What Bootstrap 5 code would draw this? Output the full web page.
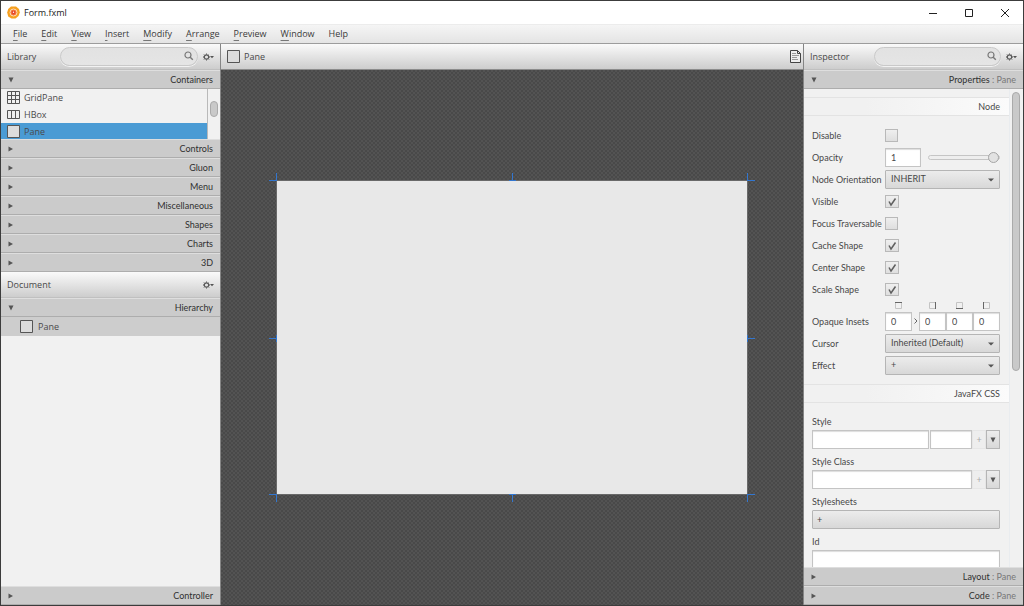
<!DOCTYPE html>
<html lang="en">
<head>
<meta charset="utf-8">
<meta name="viewport" content="width=device-width, initial-scale=1">
<title>Form.fxml</title>
<link href="https://cdn.jsdelivr.net/npm/bootstrap@5.3.0/dist/css/bootstrap.min.css" rel="stylesheet">
<style>
:root { --ink:#484848; }
body { font-family:Lato,"Open Sans",sans-serif; font-size:9px; line-height:12px; color:var(--ink); background:#f1f1f1; }
button, input, select { font-family:inherit; font-size:inherit; line-height:inherit; color:inherit; }
.window { border:1px solid #3c3c3c; }
.titlebar, .menubar, .bar, .lib-item, .tree-item { font-family:"Open Sans","Noto Sans",sans-serif; font-size:9px; }
.titlebar { height:23px; background:#fff; color:#222; padding-left:6px; }
.win-btn { width:36px; height:22px; border:0; background:none; padding:0; }
.menubar { height:20px; background:linear-gradient(#f5f5f5,#e4e4e4); border-bottom:1px solid #9c9c9c; border-top:1px solid #ececec; gap:14px; padding-left:12px; }
.menubar a { color:#3a3a3a; text-decoration:none; }
.menubar u { text-underline-offset:3px; text-decoration-thickness:1px; text-decoration-color:#777; }
.side { flex:0 0 219px; box-sizing:content-box; min-width:0; }
.side-left { border-right:1px solid #858585; }
.side-right { border-left:1px solid #858585; }
.bar { height:26px; flex:none; background:linear-gradient(#fafafa,#cdcdcd); border-bottom:1px solid #c0c0c0; padding:0 6px; }
.content-bar { border-bottom:1px solid #8c8c8c; padding-right:2px; }
.search { position:relative; width:138px; height:19px; }
.search-short { width:127px; }
.search input { width:100%; height:100%; border:1px solid #c9c9c9; border-radius:10px; background:linear-gradient(#e2e2e2,#e5e5e5); padding:0 22px 0 8px; box-shadow:0 1px 0 #f2f2f2; }
.search svg { position:absolute; right:4px; top:4px; }
.gear { border:0; background:none; padding:0; width:12px; height:16px; }
.fold { height:19px; width:100%; flex:none; border:0; border-top:1px solid #dedede; border-bottom:1px solid #adadad; background:#cbcbcb; padding:0 7px; color:#303030; }
.fold .sub { color:#777; }
.fold svg { fill:#555; }
.lib-list { height:50px; border-right:1px solid #b9b9b9; overflow:hidden; }
.lib-item { height:17px; padding-left:6px; gap:4px; color:#4a4a4a; }
.lib-item.active { background:#4a9bd4; }
.tree-item { height:19px; background:#cdcdcd; padding-left:19px; gap:5px; color:#4a4a4a; }
.gutter { width:13px; padding:3px 3px 0 2px; flex:none; }
.gutter-list { width:12px; padding:12px 2px 0 2px; }
.thumb { width:8px; height:16px; border:1px solid #aaa; border-radius:4px; background:#c9c9c9; }
.long-thumb { height:279px; }
.stage { min-width:0; background-color:#4d4d4d; background-image:conic-gradient(#535353 25%,#494949 0 50%,#535353 0 75%,#494949 0); background-size:4px 4px; }
.artboard { position:relative; width:470px; height:313px; flex:none; background:#e8e8e8; box-shadow:0 0 0 1px #696969; }
.handle { position:absolute; overflow:visible; fill:none; stroke:#3276cf; stroke-width:1; }
.sheet { flex:1 1 0; min-width:0; }
.section-title { height:19px; border:1px solid #e3e3e3; border-left:0; border-right:0; background:linear-gradient(90deg,#f1f1f1 30%,#fbfbfb); padding-right:9px; font-weight:400; font-size:9px; line-height:12px; }
.props { padding:8px 9px 8px 8px; }
.prop { height:22px; }
.prop > label, .prop > .prop-label { width:73px; flex:none; white-space:nowrap; padding-top:2px; }
.field { height:19px; border:1px solid #c4c4c4; background:#fff; box-shadow:inset 0 1px 1px #ddd; padding:0 5px; border-radius:0; min-width:0; }
.amount { width:36px; }
.inset { width:27px; }
.style-value { width:42px; margin-left:1px; }
.drop { position:relative; height:19px; border:1px solid #b5b5b5; border-radius:1px; background:linear-gradient(#ececec,#d8d8d8); min-width:0; padding:0; }
.drop select { appearance:none; background:none; border:0; width:100%; height:17px; padding:0 5px; display:block; }
.drop svg { position:absolute; right:5px; top:6px; pointer-events:none; fill:#555; }
.tick { appearance:none; width:13px; height:13px; margin:0; border:1px solid #b9b9b9; background:linear-gradient(#efefef,#dfdfdf); }
.tick:checked { width:14px; background:url("data:image/svg+xml,%3Csvg xmlns='http://www.w3.org/2000/svg' viewBox='0 0 12 11'%3E%3Cpath d='M3 5.5 5 9 9.5 2.5' fill='none' stroke='%23606060' stroke-width='1.5'/%3E%3C/svg%3E") center/12px 11px no-repeat,linear-gradient(#efefef,#dfdfdf); }
.slide { appearance:none; width:72px; height:12px; background:none; margin:0; }
.slide::-webkit-slider-runnable-track { height:5px; border:1px solid #c5c5c5; border-radius:3px; background:#eee; }
.slide::-webkit-slider-thumb { appearance:none; width:11px; height:11px; margin-top:-4px; border:1px solid #a5a5a5; border-radius:50%; background:#e2e2e2; }
.insets-key { height:10px; padding-left:83px; }
.insets-key svg { fill:none; }
.block { height:40px; }
.block > label { display:block; height:19px; padding-top:5px; }
.mini { width:14px; height:19px; border:1px solid #e6e6e6; background:#eee; color:#aaa; padding:0; }
.mini-drop { width:14px; height:19px; border:1px solid #b5b5b5; background:linear-gradient(#ececec,#d8d8d8); padding:0; fill:#555; }
</style>
<script src="https://cdn.jsdelivr.net/npm/bootstrap@5.3.0/dist/js/bootstrap.bundle.min.js"></script>
</head>
<body>
<svg class="d-none">
  <symbol id="gear" viewBox="0 0 12 8"><circle cx="4.500" cy="4" r="2.200" fill="none" stroke="#555" stroke-width="1.200"/><path d="M4.500 0.500v1M4.500 6.500v1M1 4h1M7 4h1M2 1.500l.7.7M6.300 5.800l.7.7M2 6.500l.7-.7M6.300 2.200l.7-.7" stroke="#555"/><path d="M8 3h4L10 5.300z" fill="#555"/></symbol>
  <symbol id="lens" viewBox="0 0 10 10"><circle cx="4" cy="4" r="3" fill="none" stroke="#777" stroke-width="1.200"/><path d="M6.200 6.200 8.800 8.800" stroke="#777" stroke-width="1.400"/></symbol>
  <symbol id="right" viewBox="0 0 6 6"><path d="M.5.5 5 3 .5 5.500z"/></symbol>
  <symbol id="down" viewBox="0 0 6 6"><path d="M.5.5h5L3 5.500z"/></symbol>
  <symbol id="caret" viewBox="0 0 6 6"><path d="M0 1.500h6L3 4.500z"/></symbol>
  <symbol id="pane" viewBox="0 0 13 13"><path d="M.5.5h12v12H.5z" fill="#dcdcdc" stroke="#555"/></symbol>
</svg>
<div class="window vh-100 d-flex flex-column overflow-hidden">
  <header class="titlebar d-flex align-items-center flex-shrink-0">
    <svg width="13" height="13" viewBox="0 0 13 13" class="me-1"><path d="M4 .5h5L12 3l.8 3.500L11.500 10 8.500 12.600h-4L1.200 10.500 .2 6.500 1.200 3z" fill="#f6a01f"/><circle cx="6.500" cy="6.500" r="3.500" fill="#f4703a" stroke="#fde0b8"/><path d="M5 5h3v2.500L6.500 8.500 5 7.500z" fill="#e2442d"/><circle cx="6.500" cy="6.300" r=".7" fill="#fff"/></svg>
    <span>Form.fxml</span>
    <div class="ms-auto d-flex">
      <button class="win-btn" aria-label="Minimize"><svg width="10" height="10"><path d="M1 5.500h8" stroke="#222"/></svg></button>
      <button class="win-btn" aria-label="Maximize"><svg width="10" height="10"><path d="M1.500 1.500h7v7h-7z" fill="none" stroke="#222"/></svg></button>
      <button class="win-btn" aria-label="Close"><svg width="10" height="10"><path d="m1 1 8 8M9 1 1 9" stroke="#222"/></svg></button>
    </div>
  </header>
  <nav class="menubar d-flex align-items-center flex-shrink-0">
    <a href="#"><u>F</u>ile</a><a href="#"><u>E</u>dit</a><a href="#"><u>V</u>iew</a><a href="#"><u>I</u>nsert</a><a href="#"><u>M</u>odify</a><a href="#"><u>A</u>rrange</a><a href="#"><u>P</u>review</a><a href="#"><u>W</u>indow</a><a href="#">Help</a>
  </nav>
  <main class="d-flex flex-grow-1 overflow-hidden">
    <aside class="side side-left d-flex flex-column">
      <div class="bar d-flex align-items-center">
        <label for="libSearch">Library</label>
        <div class="search ms-auto me-1"><input id="libSearch" type="text"><svg width="10" height="10"><use href="#lens"/></svg></div>
        <button class="gear d-flex align-items-center" aria-label="Library options"><svg width="12" height="8"><use href="#gear"/></svg></button>
      </div>
      <button class="fold d-flex align-items-center justify-content-between"><svg width="6" height="6"><use href="#down"/></svg>Containers</button>
      <div class="d-flex">
        <div class="lib-list flex-grow-1">
          <div class="lib-item d-flex align-items-center"><svg width="13" height="13"><path d="M.5.5h12v12H.5zM4.500 0v13M8.500 0v13M0 4.500h13M0 8.500h13" fill="none" stroke="#555"/></svg>GridPane</div>
          <div class="lib-item d-flex align-items-center"><svg width="13" height="9"><path d="M.5.5h12v8H.5zM4.500 0v9M8.500 0v9" fill="#eee" stroke="#555"/></svg>HBox</div>
          <div class="lib-item active d-flex align-items-center"><svg width="13" height="13"><use href="#pane"/></svg>Pane</div>
        </div>
        <div class="gutter gutter-list"><div class="thumb"></div></div>
      </div>
      <button class="fold d-flex align-items-center justify-content-between"><svg width="6" height="6"><use href="#right"/></svg>Controls</button>
      <button class="fold d-flex align-items-center justify-content-between"><svg width="6" height="6"><use href="#right"/></svg>Gluon</button>
      <button class="fold d-flex align-items-center justify-content-between"><svg width="6" height="6"><use href="#right"/></svg>Menu</button>
      <button class="fold d-flex align-items-center justify-content-between"><svg width="6" height="6"><use href="#right"/></svg>Miscellaneous</button>
      <button class="fold d-flex align-items-center justify-content-between"><svg width="6" height="6"><use href="#right"/></svg>Shapes</button>
      <button class="fold d-flex align-items-center justify-content-between"><svg width="6" height="6"><use href="#right"/></svg>Charts</button>
      <button class="fold d-flex align-items-center justify-content-between"><svg width="6" height="6"><use href="#right"/></svg>3D</button>
      <div class="bar d-flex align-items-center justify-content-between">
        <span>Document</span>
        <button class="gear d-flex align-items-center" aria-label="Document options"><svg width="12" height="8"><use href="#gear"/></svg></button>
      </div>
      <button class="fold d-flex align-items-center justify-content-between"><svg width="6" height="6"><use href="#down"/></svg>Hierarchy</button>
      <div class="tree-item d-flex align-items-center"><svg width="13" height="13"><use href="#pane"/></svg>Pane</div>
      <button class="fold d-flex align-items-center justify-content-between mt-auto"><svg width="6" height="6"><use href="#right"/></svg>Controller</button>
    </aside>

    <section class="flex-grow-1 d-flex flex-column overflow-hidden">
      <div class="bar content-bar d-flex align-items-center">
        <svg width="13" height="13"><use href="#pane"/></svg><span class="ms-1">Pane</span>
        <svg class="ms-auto" width="11" height="13"><path d="M.5.5h7l3 3v9H.5z" fill="#eee" stroke="#444"/><path d="M7.500.5v3h3" fill="none" stroke="#444"/><path d="M2 3.500h4M2 5.500h7M2 7.500h5M2 9.500h6" stroke="#999"/></svg>
      </div>
      <div class="stage flex-grow-1 d-flex align-items-center justify-content-center">
        <div class="artboard">
          <svg class="handle top-0 start-0" width="1" height="1"><path d="M-.5-8v8M-8-.5h8"/></svg>
          <svg class="handle top-0 start-50" width="1" height="1"><path d="M.5-8v8M-3-.5h7"/></svg>
          <svg class="handle top-0 start-100" width="1" height="1"><path d="M.5-8v8M0-.5h8"/></svg>
          <svg class="handle top-50 start-0" width="1" height="1"><path d="M-8 .5h8M-.5-3v7"/></svg>
          <svg class="handle top-50 start-100" width="1" height="1"><path d="M0 .5h8M.5-3v7"/></svg>
          <svg class="handle top-100 start-0" width="1" height="1"><path d="M-.5 0v8M-8 .5h8"/></svg>
          <svg class="handle top-100 start-50" width="1" height="1"><path d="M.5 0v8M-3 .5h7"/></svg>
          <svg class="handle top-100 start-100" width="1" height="1"><path d="M.5 0v8M0 .5h8"/></svg>
        </div>
      </div>
    </section>

    <aside class="side side-right d-flex flex-column">
      <div class="bar d-flex align-items-center">
        <label for="inspSearch">Inspector</label>
        <div class="search search-short ms-auto me-1"><input id="inspSearch" type="text"><svg width="10" height="10"><use href="#lens"/></svg></div>
        <button class="gear d-flex align-items-center" aria-label="Inspector options"><svg width="12" height="8"><use href="#gear"/></svg></button>
      </div>
      <button class="fold d-flex align-items-center justify-content-between"><svg width="6" height="6"><use href="#down"/></svg><span>Properties <span class="sub">: Pane</span></span></button>
      <div class="d-flex flex-grow-1 overflow-hidden">
        <div class="sheet pt-2 border-end border-secondary-subtle">
          <h2 class="section-title d-flex align-items-center justify-content-end m-0">Node</h2>
          <div class="props">
            <div class="prop d-flex align-items-center"><label for="disable">Disable</label><input class="tick" id="disable" type="checkbox"></div>
            <div class="prop d-flex align-items-center"><label for="opacity">Opacity</label><input class="field amount" id="opacity" type="text" value="1"><input class="slide ms-auto" type="range" value="100" aria-label="Opacity slider"></div>
            <div class="prop d-flex align-items-center"><label for="orient">Node Orientation</label><div class="drop flex-grow-1"><select id="orient"><option>INHERIT</option></select><svg width="6" height="6"><use href="#caret"/></svg></div></div>
            <div class="prop d-flex align-items-center"><label for="visible">Visible</label><input class="tick" id="visible" type="checkbox" checked></div>
            <div class="prop d-flex align-items-center"><label for="focus">Focus Traversable</label><input class="tick" id="focus" type="checkbox"></div>
            <div class="prop d-flex align-items-center"><label for="cache">Cache Shape</label><input class="tick" id="cache" type="checkbox" checked></div>
            <div class="prop d-flex align-items-center"><label for="center">Center Shape</label><input class="tick" id="center" type="checkbox" checked></div>
            <div class="prop d-flex align-items-center"><label for="scale">Scale Shape</label><input class="tick" id="scale" type="checkbox" checked></div>
            <div class="insets-key d-flex align-items-center">
              <svg class="flex-shrink-0" width="105" height="7"><path d="M.5.5h6v6h-6zM34.500.5h6v6h-6zM61.500.5h6v6h-6zM88.500.5h6v6h-6z" stroke="#c4c4c4"/><path d="M0 .5h7M40.500 0v7M61 6.500h7M88.500 0v7" stroke="#666"/></svg>
            </div>
            <div class="prop d-flex align-items-center"><span class="prop-label">Opaque Insets</span><input class="field inset" value="0" aria-label="Top inset"><svg class="mx-auto" width="4" height="6"><path d="m.5.5 2.500 2.500-2.500 2.500" fill="none" stroke="#666"/></svg><input class="field inset" value="0" aria-label="Right inset"><input class="field inset" value="0" aria-label="Bottom inset"><input class="field inset" value="0" aria-label="Left inset"></div>
            <div class="prop d-flex align-items-center"><label for="cursor">Cursor</label><div class="drop flex-grow-1"><select id="cursor"><option>Inherited (Default)</option></select><svg width="6" height="6"><use href="#caret"/></svg></div></div>
            <div class="prop d-flex align-items-center"><label for="effect">Effect</label><div class="drop flex-grow-1"><select id="effect"><option>+</option></select><svg width="6" height="6"><use href="#caret"/></svg></div></div>
          </div>
          <h2 class="section-title d-flex align-items-center justify-content-end m-0">JavaFX CSS</h2>
          <div class="props">
            <div class="block"><label for="style">Style</label><div class="d-flex"><input class="field flex-fill" id="style" type="text" size="1"><input class="field style-value" type="text" aria-label="Style value"><button class="mini">+</button><button class="mini-drop d-flex align-items-center justify-content-center" aria-label="Style menu"><svg width="6" height="6"><use href="#down"/></svg></button></div></div>
            <div class="block"><label for="styleClass">Style Class</label><div class="d-flex"><input class="field flex-fill" id="styleClass" type="text" size="1"><button class="mini">+</button><button class="mini-drop d-flex align-items-center justify-content-center" aria-label="Style class menu"><svg width="6" height="6"><use href="#down"/></svg></button></div></div>
            <div class="block"><label for="sheets">Stylesheets</label><button class="drop w-100 d-block text-start ps-1" id="sheets">+</button></div>
            <div class="block"><label for="fxid">Id</label><input class="field w-100 d-block" id="fxid" type="text"></div>
          </div>
        </div>
        <div class="gutter"><div class="thumb long-thumb"></div></div>
      </div>
      <button class="fold d-flex align-items-center justify-content-between"><svg width="6" height="6"><use href="#right"/></svg><span>Layout <span class="sub">: Pane</span></span></button>
      <button class="fold d-flex align-items-center justify-content-between"><svg width="6" height="6"><use href="#right"/></svg><span>Code <span class="sub">: Pane</span></span></button>
    </aside>
  </main>
</div>
</body>
</html>
